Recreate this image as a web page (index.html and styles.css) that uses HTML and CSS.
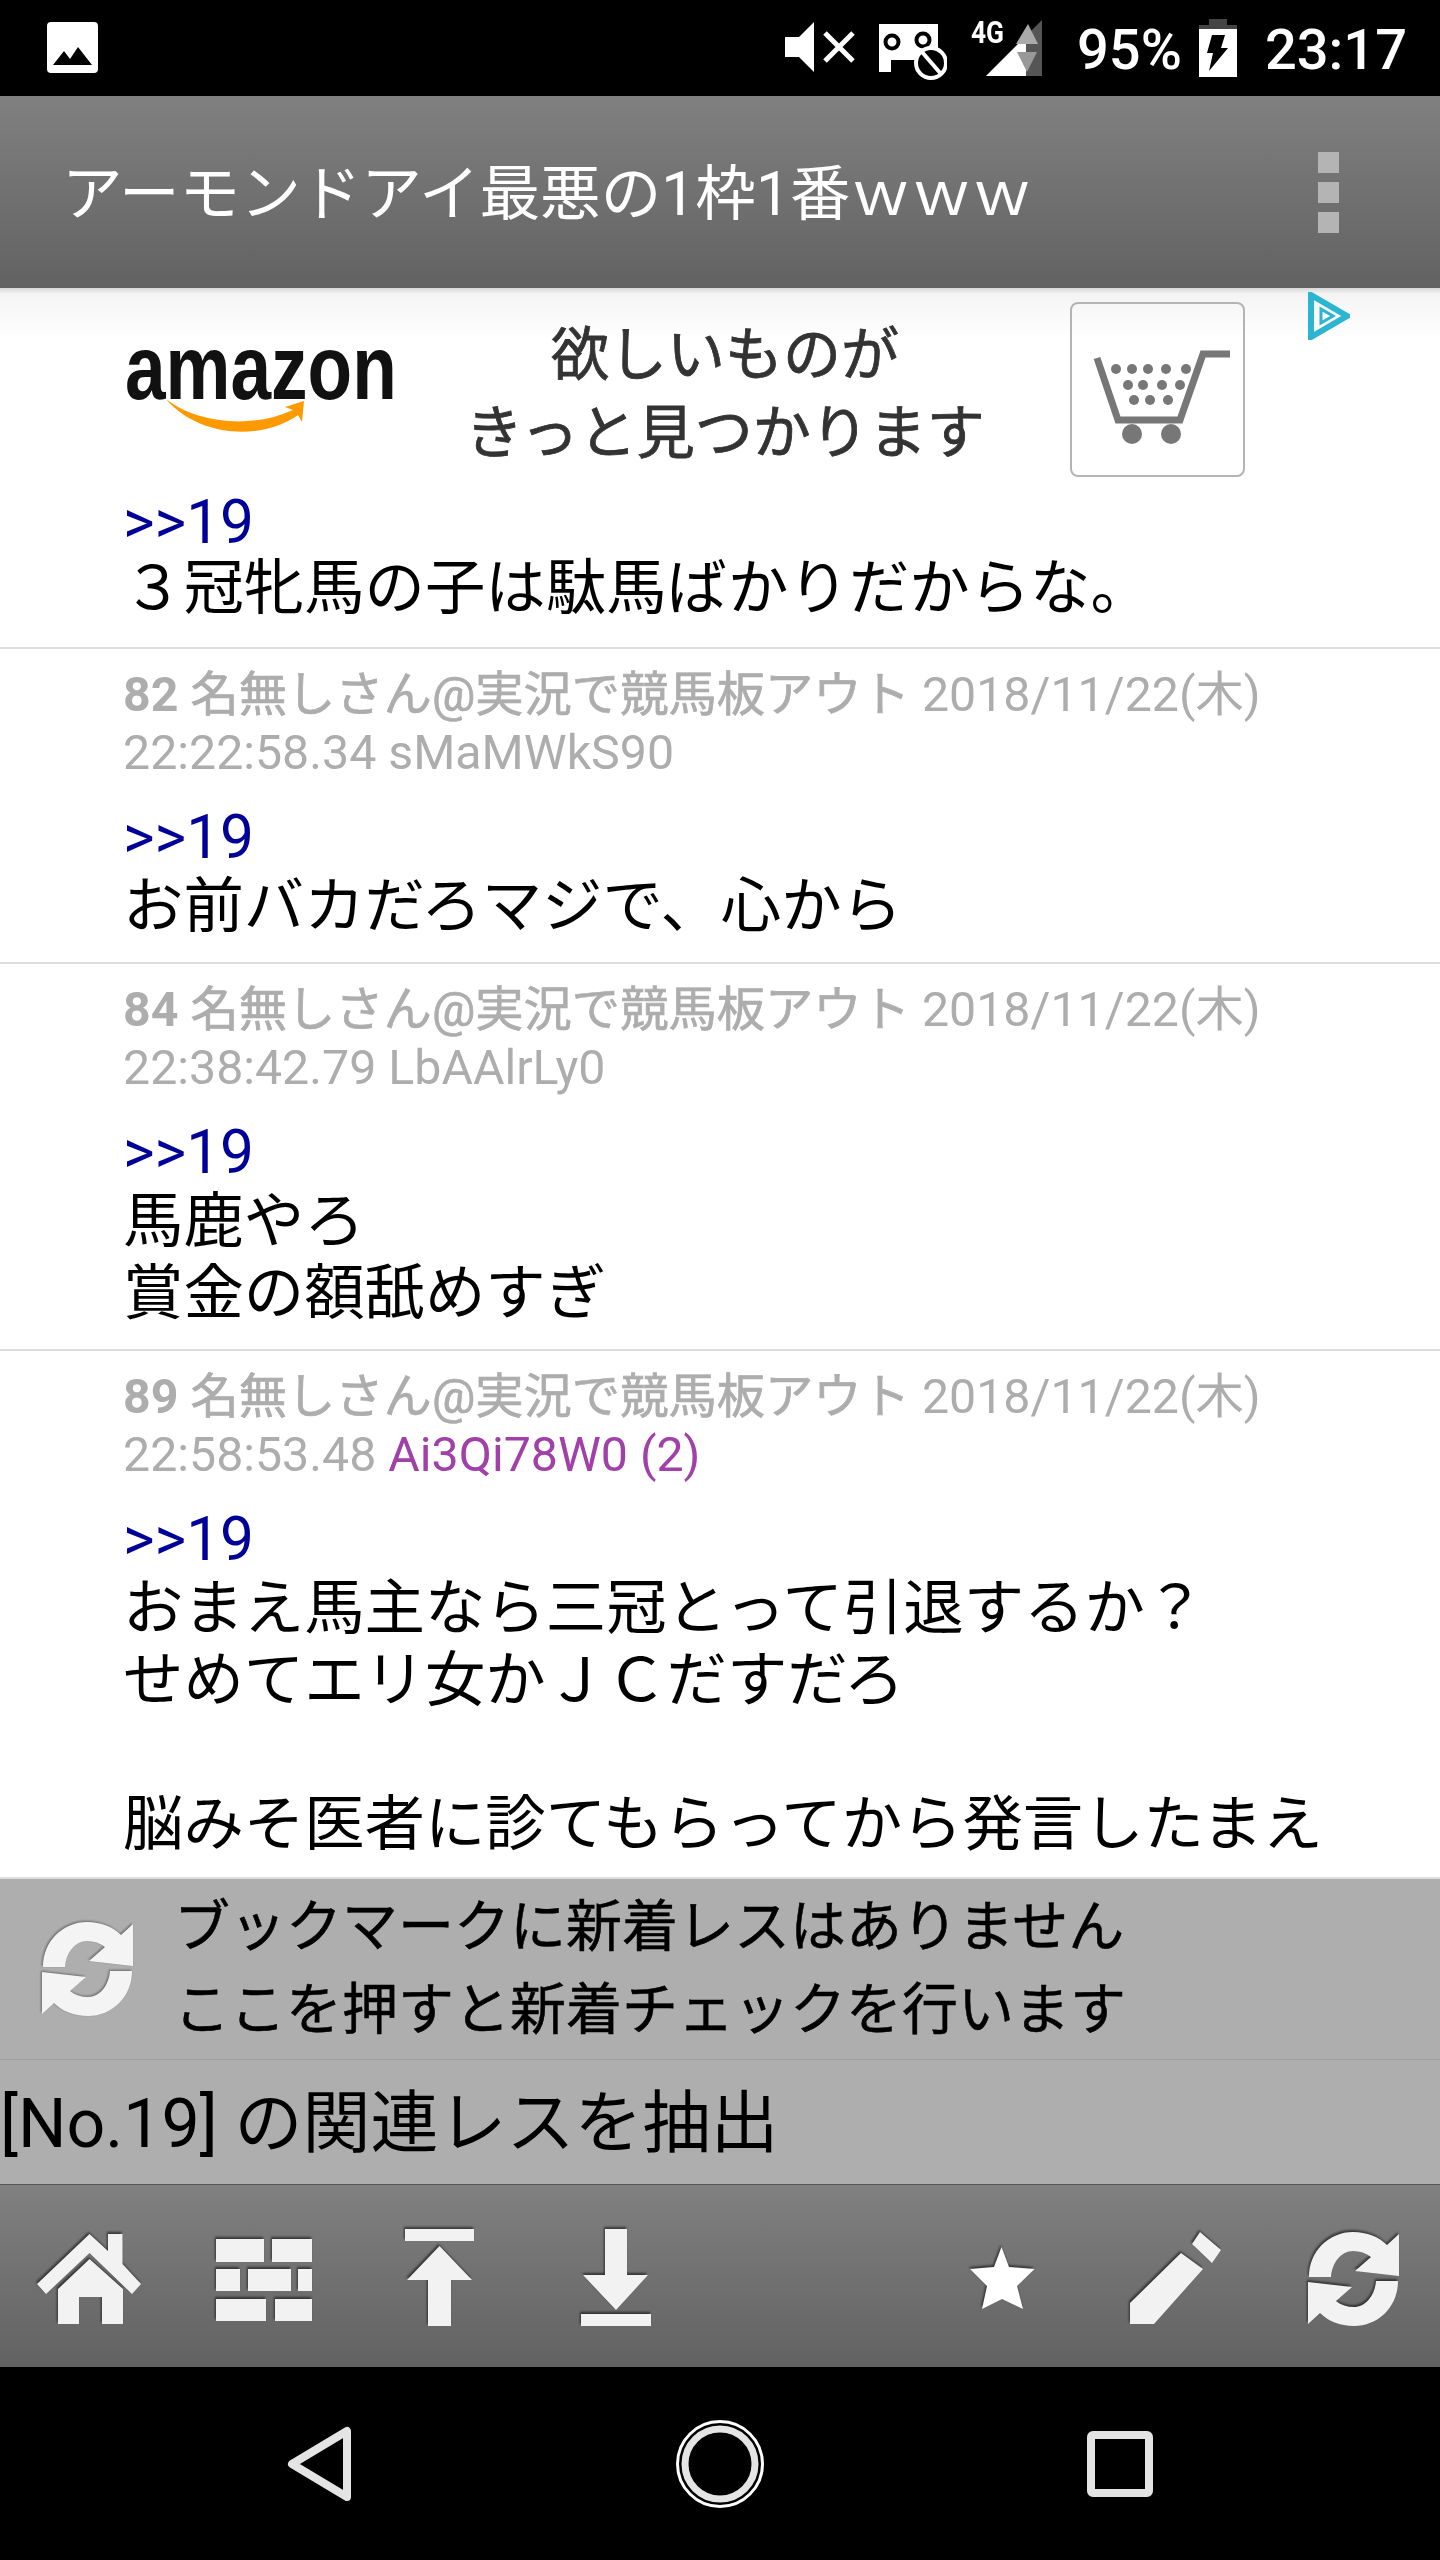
FILE: index.html
```html
<!DOCTYPE html>
<html lang="ja">
  <head>
    <meta charset="UTF-8" />
    <meta name="viewport" content="width=device-width, initial-scale=1.0" />
    <title>アーモンドアイ最悪の1枠1番ｗｗｗ</title>
    <link rel="stylesheet" href="styles.css">
  </head>
  <body>
    <svg class="sprites" width="0" height="0">
      <symbol id="sync" viewBox="42 10 94 97">
        <path d="M44 56C44 30 64 11 88 11C102 11 114 16 122 24L134 13V55L90 50L106 36C101 32 95 30 88 30C76 30 67 42 66 56Z" />
        <path d="M44 56C44 30 64 11 88 11C102 11 114 16 122 24L134 13V55L90 50L106 36C101 32 95 30 88 30C76 30 67 42 66 56Z" transform="rotate(180 88.5 58)" />
      </symbol>
    </svg>

    <div class="status-bar">
      <svg class="status-picture" width="51" height="51" viewBox="0 0 51 51">
        <path d="M4 0H47Q51 0 51 4V47Q51 51 47 51H4Q0 51 0 47V4Q0 0 4 0ZM6 43L17 29L23 37L31 25L45 43Z" fill="#fff" fill-rule="evenodd" />
      </svg>
      <div class="status-right">
        <svg class="status-mute" width="70" height="50" viewBox="0 0 70 50">
          <path d="M0 15H14L29 0V50L14 35H0Z" fill="#fff" />
          <path d="M40 11L68 39M68 11L40 39" stroke="#fff" stroke-width="5" />
        </svg>
        <svg class="status-block" width="68" height="58" viewBox="0 0 68 58">
          <path d="M0 0H59V36H12V48H0Z" fill="#fff" />
          <circle cx="13" cy="18" r="6.5" fill="#fff" stroke="#000" stroke-width="4" />
          <circle cx="44" cy="16" r="6.5" fill="#fff" stroke="#000" stroke-width="4" />
          <circle cx="52" cy="39" r="15" fill="#000" stroke="#fff" stroke-width="4" />
          <path d="M43 28L62 50" stroke="#fff" stroke-width="4" />
        </svg>
        <div class="status-signal">
          <span class="status-4g">4G</span>
          <svg width="56" height="56" viewBox="0 0 56 56">
            <path d="M0 56L56 0V56Z" fill="#555" />
            <path d="M0 56L40 16V56Z" fill="#fff" />
            <path d="M42 4L52 24H30Z" fill="#aaa" />
            <path d="M31 32H51L41 52Z" fill="#999" />
          </svg>
        </div>
        <span class="status-text status-percent">95%</span>
        <svg class="status-battery" width="38" height="58" viewBox="0 0 38 58">
          <path d="M10 0H28V6H38V11H0V6H10Z" fill="#444" />
          <path d="M0 10H38V58H0ZM13 16L8 34H14L10 52L29 29H22L26 16Z" fill="#fff" fill-rule="evenodd" />
        </svg>
        <span class="status-text status-time">23:17</span>
      </div>
    </div>

    <div class="title-bar">
      <h1>アーモンドアイ最悪の1枠1番ｗｗｗ</h1>
      <div class="menu-dots"><span></span><span></span><span></span></div>
    </div>

    <div class="main">
      <div class="ad">
        <div class="ad-logo">
          <span class="ad-logo-word">amazon</span>
          <svg width="140" height="36" viewBox="0 0 140 36">
            <path d="M1 1C30 24 85 32 128 12L120 9L139 3L137 24L133 17C95 44 32 38 1 1Z" fill="#f90" />
          </svg>
        </div>
        <div class="ad-text">
          <div>欲しいものが</div>
          <div>きっと見つかります</div>
        </div>
        <div class="ad-cart">
          <svg width="175" height="175" viewBox="0 0 175 175">
            <path d="M27 56L48 118H110L133 52H160" fill="none" stroke="#777" stroke-width="7" />
            <g fill="#777">
              <circle cx="46" cy="67" r="5" /><circle cx="62" cy="67" r="5" /><circle cx="78" cy="67" r="5" /><circle cx="96" cy="67" r="5" /><circle cx="116" cy="67" r="5" />
              <circle cx="58" cy="83" r="5" /><circle cx="73" cy="83" r="5" /><circle cx="92" cy="83" r="5" /><circle cx="110" cy="83" r="5" />
              <circle cx="64" cy="98" r="5" /><circle cx="80" cy="98" r="5" /><circle cx="98" cy="98" r="5" />
              <circle cx="62" cy="132" r="10" /><circle cx="101" cy="132" r="10" />
            </g>
          </svg>
        </div>
        <svg class="ad-choices" width="42" height="48" viewBox="0 0 42 48">
          <path d="M3 3L39 24L3 45Z" fill="none" stroke="#2bb5d0" stroke-width="6" />
          <path d="M13 17L25 24L13 31Z" fill="none" stroke="#2bb5d0" stroke-width="3" />
        </svg>
      </div>

      <div class="res first-res">
        <div class="res-anchor">&gt;&gt;19</div>
        <div class="res-body">３冠牝馬の子は駄馬ばかりだからな。</div>
      </div>
      <div class="res">
        <div class="res-meta"><b>82</b> <span class="res-name">名無しさん@実況で競馬板アウト</span> 2018/11/22(木)<br>22:22:58.34 sMaMWkS90</div>
        <div class="res-anchor">&gt;&gt;19</div>
        <div class="res-body">お前バカだろマジで、心から</div>
      </div>
      <div class="res">
        <div class="res-meta"><b>84</b> <span class="res-name">名無しさん@実況で競馬板アウト</span> 2018/11/22(木)<br>22:38:42.79 LbAAlrLy0</div>
        <div class="res-anchor">&gt;&gt;19</div>
        <div class="res-body">馬鹿やろ<br>賞金の額舐めすぎ</div>
      </div>
      <div class="res">
        <div class="res-meta"><b>89</b> <span class="res-name">名無しさん@実況で競馬板アウト</span> 2018/11/22(木)<br>22:58:53.48 <span class="res-id">Ai3Qi78W0 (2)</span></div>
        <div class="res-anchor">&gt;&gt;19</div>
        <div class="res-body">おまえ馬主なら三冠とって引退するか？<br>せめてエリ女かＪＣだすだろ<br><br>脳みそ医者に診てもらってから発言したまえ</div>
      </div>
    </div>

    <div class="notice">
      <svg class="notice-icon" width="94" height="97"><use href="#sync" /></svg>
      <div class="notice-text">
        <div>ブックマークに新着レスはありません</div>
        <div>ここを押すと新着チェックを行います</div>
      </div>
    </div>
    <div class="filter-label">[No.19] の関連レスを抽出</div>

    <div class="toolbar">
      <div class="tool-group">
        <svg class="tool" viewBox="0 0 176 110">
          <path d="M89.5 13L108 30V13H122.5V43L141 63L132 73L89.5 32L46 73L37 63Z" />
          <path d="M89.5 38L123 68V103H102V76H79V103H58V68Z" />
        </svg>
        <svg class="tool" viewBox="0 0 176 110">
          <path d="M40 18H88V41H40ZM96 18H136V41H96ZM40 48H64V70H40ZM72 48H115V70H72ZM122 48H136V70H122ZM40 78H90V100H40ZM99 78H136V100H99Z" />
        </svg>
        <svg class="tool" viewBox="0 0 176 110">
          <path d="M53 8H122V20H53ZM87.5 25L120 59H99V105H76V59H55Z" />
        </svg>
        <svg class="tool" viewBox="0 0 176 110">
          <path d="M77 8H99V54H120L88 89L55 54H77ZM53 93H123V105H53Z" />
        </svg>
      </div>
      <div class="tool-group">
        <svg class="tool tool-star" viewBox="0 0 175 110">
          <path d="M86.5 26L94 46L119.5 48L102 65L108 88L87 78L67 88L72 65L55 48L79 46Z" />
        </svg>
        <svg class="tool" viewBox="0 0 175 110">
          <path d="M40 103V82L91 32L113 48L64 103ZM110 11L131 29L122 42L102 23Z" />
        </svg>
        <svg class="tool" viewBox="0 0 175 110">
          <use href="#sync" x="42" y="10" width="94" height="97" />
        </svg>
      </div>
    </div>

    <div class="nav-bar">
      <svg width="66" height="78" viewBox="0 0 66 78">
        <path d="M5 39L60 6V72Z" fill="none" stroke="#e4e4e4" stroke-width="8" stroke-linejoin="round" />
      </svg>
      <svg width="90" height="90" viewBox="0 0 90 90">
        <circle cx="45" cy="45" r="42.5" fill="none" stroke="#fff" stroke-width="3" />
        <circle cx="45" cy="45" r="35" fill="none" stroke="#e4e4e4" stroke-width="7" />
      </svg>
      <svg width="66" height="66" viewBox="0 0 66 66">
        <rect x="4" y="4" width="58" height="58" rx="2" fill="none" stroke="#e4e4e4" stroke-width="8" />
      </svg>
    </div>
  </body>
</html>
```

FILE: styles.css
```css
body {
  margin: 0;
  width: 1440px;
  height: 2560px;
  display: flex;
  flex-direction: column;
  overflow: hidden;
  background: #000;
  font-family: Roboto, "Noto Sans CJK JP", sans-serif;
}
.sprites {
  position: absolute;
}

/* status bar */
.status-bar {
  height: 96px;
  flex: none;
  display: flex;
  align-items: flex-start;
  justify-content: space-between;
  background: #000;
  color: #fff;
}
.status-picture {
  margin: 22px 0 0 47px;
}
.status-right {
  display: flex;
  align-items: flex-start;
  padding-right: 33px;
}
.status-mute {
  margin-top: 22px;
}
.status-block {
  margin: 24px 0 0 24px;
}
.status-signal {
  position: relative;
  margin: 20px 0 0 39px;
  height: 56px;
}
.status-4g {
  position: absolute;
  left: -15px;
  top: -2px;
  font-size: 31px;
  line-height: 30px;
  font-weight: 700;
  transform: scaleX(0.85);
  transform-origin: left;
}
.status-text {
  font-size: 56px;
  line-height: 100px;
}
.status-percent {
  margin-left: 35px;
  font-weight: 500;
}
.status-battery {
  margin: 19px 0 0 17px;
}
.status-time {
  margin-left: 28px;
  font-weight: 500;
}

/* title */
.title-bar {
  height: 192px;
  flex: none;
  display: flex;
  align-items: center;
  justify-content: space-between;
  box-sizing: border-box;
  padding: 0 101px 8px 62px;
  background: linear-gradient(#808080, #626262);
}
h1 {
  margin: 0;
  font-size: 60.6px;
  font-weight: 400;
  color: #fff;
}
.menu-dots {
  display: flex;
  flex-direction: column;
  gap: 9px;
  margin-bottom: -8px;
}
.menu-dots span {
  display: block;
  width: 21px;
  height: 21px;
  background: #b4b4b4;
}

/* thread */
.main {
  flex: 1;
  min-height: 0;
  overflow: hidden;
  background: #fff;
  border-bottom: 2px solid #ddd;
}
.ad {
  position: relative;
  height: 202px;
  display: flex;
  align-items: flex-start;
  padding-left: 127px;
  background: linear-gradient(#d8d8d8, #f4f4f4 6px, #fff 50px);
}
.ad-logo {
  width: 268px;
  padding-top: 50px;
}
.ad-logo-word {
  display: block;
  margin-left: -2px;
  font-family: "Liberation Sans", sans-serif;
  font-size: 73px;
  font-weight: 700;
  line-height: 60px;
  color: #111;
  transform: scaleY(1.25);
}
.ad-logo svg {
  display: block;
  margin: 0 0 0 38px;
}
.ad-text {
  width: 660px;
  padding-top: 28px;
  text-align: center;
  font-size: 58px;
  line-height: 78px;
  color: #333;
  -webkit-text-stroke: 0.8px #333;
}
.ad-cart {
  width: 175px;
  height: 175px;
  margin: 14px 0 0 15px;
  border: 2px solid #b4b4b4;
  border-radius: 8px;
  box-sizing: border-box;
}
.ad-cart svg {
  display: block;
  margin: -2px;
}
.ad-choices {
  position: absolute;
  left: 1308px;
  top: 4px;
}
.res {
  padding: 17px 0 19px 123px;
  border-bottom: 2px solid #ddd;
}
.first-res {
  padding: 0 0 22px 123px;
}
.res:last-child {
  border-bottom: none;
}
.res-meta {
  font-size: 48.3px;
  line-height: 58px;
  color: #adadad;
  white-space: nowrap;
}
.res-name {
  -webkit-text-stroke: 0.7px #adadad;
}
.res-id {
  color: #a040a8;
}
.res-anchor {
  margin-top: 23px;
  font-size: 60.4px;
  line-height: 66px;
  color: #000099;
}
.first-res .res-anchor {
  margin: 0 0 -3px;
}
.res-body {
  font-size: 60.4px;
  line-height: 72px;
  color: #000;
  white-space: nowrap;
}

/* panels above the toolbar */
.notice {
  height: 181px;
  flex: none;
  display: flex;
  align-items: center;
  box-sizing: border-box;
  padding-left: 41px;
  background: #aeaeae;
  border-bottom: 1px solid #9e9e9e;
}
.notice-icon {
  fill: #f4f4f4;
  filter: drop-shadow(-1px -1px 1px rgba(0, 0, 0, 0.4));
}
.notice-text {
  margin-left: 39px;
  font-size: 56px;
  line-height: 83px;
  color: #000;
  -webkit-text-stroke: 0.5px #000;
}
.filter-label {
  height: 124px;
  flex: none;
  background: #aeaeae;
  font-size: 68px;
  line-height: 128px;
  color: #000;
  white-space: nowrap;
  overflow: hidden;
}

/* toolbar */
.toolbar {
  height: 183px;
  flex: none;
  display: flex;
  justify-content: space-between;
  box-sizing: border-box;
  padding-top: 36px;
  background: linear-gradient(#808080, #626262);
  border-top: 1px solid #555;
}
.tool-group {
  display: flex;
}
.tool {
  width: 176px;
  height: 110px;
  fill: #f2f2f2;
  filter: drop-shadow(-1px -2px 1px rgba(0, 0, 0, 0.55));
}
.tool-group:last-child .tool {
  width: 175px;
}
.tool-star {
  fill: #fff;
}

/* android nav */
.nav-bar {
  height: 193px;
  flex: none;
  display: flex;
  align-items: center;
  justify-content: space-between;
  padding: 0 287px;
  background: #000;
}
```
